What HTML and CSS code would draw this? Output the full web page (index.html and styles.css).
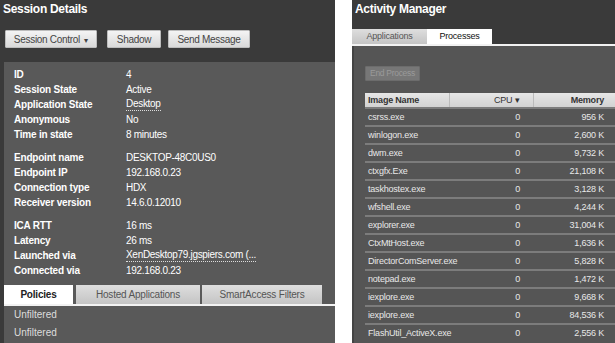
FILE: index.html
```html
<!DOCTYPE html>
<html>
<head>
    <title>Session Details / Activity Manager</title>
    <link rel="stylesheet" href="styles.css">
</head>
<body>
    <!-- Session Details -->
    <div class="session">
        <div class="panel-title">Session Details</div>
        <div class="toolbar">
            <button class="btn">Session Control <span class="caret">▾</span></button>
            <button class="btn">Shadow</button>
            <button class="btn">Send Message</button>
        </div>
        <div class="details">
            <div class="group">
                <div class="row"><span class="label">ID</span><span class="value">4</span></div>
                <div class="row"><span class="label">Session State</span><span class="value">Active</span></div>
                <div class="row"><span class="label">Application State</span><span class="value link">Desktop</span></div>
                <div class="row"><span class="label">Anonymous</span><span class="value">No</span></div>
                <div class="row"><span class="label">Time in state</span><span class="value">8 minutes</span></div>
            </div>
            <div class="group">
                <div class="row"><span class="label">Endpoint name</span><span class="value">DESKTOP-48C0US0</span></div>
                <div class="row"><span class="label">Endpoint IP</span><span class="value">192.168.0.23</span></div>
                <div class="row"><span class="label">Connection type</span><span class="value">HDX</span></div>
                <div class="row"><span class="label">Receiver version</span><span class="value">14.6.0.12010</span></div>
            </div>
            <div class="group">
                <div class="row"><span class="label">ICA RTT</span><span class="value">16 ms</span></div>
                <div class="row"><span class="label">Latency</span><span class="value">26 ms</span></div>
                <div class="row"><span class="label">Launched via</span><span class="value link">XenDesktop79.jgspiers.com (...</span></div>
                <div class="row"><span class="label">Connected via</span><span class="value">192.168.0.23</span></div>
            </div>

            <div class="tabs session-tabs">
                <div class="tab active">Policies</div>
                <div class="tab">Hosted Applications</div>
                <div class="tab">SmartAccess Filters</div>
            </div>
            <div class="policy">Unfiltered</div>
            <div class="policy">Unfiltered</div>
        </div>
    </div>

    <!-- Activity Manager -->
    <div class="activity">
        <div class="panel-title">Activity Manager</div>
        <div class="tabs activity-tabs">
            <div class="tab">Applications</div>
            <div class="tab active">Processes</div>
        </div>
        <div class="processes">
            <button class="btn disabled">End Process</button>
            <table class="proc-table">
                <colgroup>
                    <col class="col-name">
                    <col class="col-cpu">
                    <col class="col-mem">
                </colgroup>
                <thead>
                    <tr>
                        <th>Image Name</th>
                        <th class="cpu">CPU <span class="caret">▾</span></th>
                        <th class="mem">Memory</th>
                    </tr>
                </thead>
                <tbody>
                    <tr><td>csrss.exe</td><td class="cpu">0</td><td class="mem">956 K</td></tr>
                    <tr><td>winlogon.exe</td><td class="cpu">0</td><td class="mem">2,600 K</td></tr>
                    <tr><td>dwm.exe</td><td class="cpu">0</td><td class="mem">9,732 K</td></tr>
                    <tr><td>ctxgfx.Exe</td><td class="cpu">0</td><td class="mem">21,108 K</td></tr>
                    <tr><td>taskhostex.exe</td><td class="cpu">0</td><td class="mem">3,128 K</td></tr>
                    <tr><td>wfshell.exe</td><td class="cpu">0</td><td class="mem">4,244 K</td></tr>
                    <tr><td>explorer.exe</td><td class="cpu">0</td><td class="mem">31,004 K</td></tr>
                    <tr><td>CtxMtHost.exe</td><td class="cpu">0</td><td class="mem">1,636 K</td></tr>
                    <tr><td>DirectorComServer.exe</td><td class="cpu">0</td><td class="mem">5,828 K</td></tr>
                    <tr><td>notepad.exe</td><td class="cpu">0</td><td class="mem">1,472 K</td></tr>
                    <tr><td>iexplore.exe</td><td class="cpu">0</td><td class="mem">9,668 K</td></tr>
                    <tr><td>iexplore.exe</td><td class="cpu">0</td><td class="mem">84,536 K</td></tr>
                    <tr><td>FlashUtil_ActiveX.exe</td><td class="cpu">0</td><td class="mem">2,556 K</td></tr>
                </tbody>
            </table>
        </div>
    </div>
</body>
</html>
```

FILE: styles.css
```css
body {
    margin: 0;
    width: 615px;
    height: 343px;
    display: flex;
    background: #fff;
    font-family: "Liberation Sans", Arial, sans-serif;
    overflow: hidden;
}

.panel-title {
    color: #fff;
    font-weight: bold;
    font-size: 12px;
    letter-spacing: -0.3px;
    padding: 2px 3px;
    line-height: 14px;
}

.btn {
    font-family: inherit;
    font-size: 10px;
    letter-spacing: -0.3px;
    color: #444;
    height: 18px;
    padding: 0;
    white-space: nowrap;
    border: 1px solid #bdbdbd;
    border-radius: 1px;
    background: linear-gradient(#f4f4f4, #d9d9d9);
}

.btn .caret {
    font-size: 8px;
    margin-left: 2px;
}

.btn.disabled {
    color: #9a9a9a;
    background: #777;
    border-color: #6c6c6c;
    height: 15px;
    width: 55px;
    font-size: 8.5px;
}

/* left panel */
.session {
    width: 335px;
    background: #3a3a3a;
    display: flex;
    flex-direction: column;
}

.toolbar {
    display: flex;
    gap: 10px;
    padding: 12px 0 0 5px;
}

.toolbar .btn:first-child {
    width: 92px;
}

.toolbar .btn:nth-child(2) {
    width: 54px;
}

.toolbar .btn:nth-child(3) {
    width: 82px;
    margin-left: -3px;
}

.details {
    flex: 1;
    margin: 14px 0 0 4px;
    background: #595959;
    padding-top: 5px;
}

.group {
    margin-bottom: 8px;
}

.row {
    display: flex;
    height: 15px;
    line-height: 15px;
    font-size: 10px;
    color: #fff;
}

.label {
    width: 112px;
    padding-left: 10px;
    font-weight: bold;
    letter-spacing: -0.2px;
}

.value {
    letter-spacing: -0.3px;
}

.link {
    border-bottom: 1px dotted #ddd;
    line-height: 13px;
    height: 13px;
}

.tabs {
    display: flex;
    border-bottom: 2px solid #f2f2f2;
}

.tab {
    font-size: 10px;
    color: #555;
    text-align: center;
    background: linear-gradient(#dedede, #c4c4c4);
    letter-spacing: -0.2px;
}

.tab.active {
    background: #fff;
    color: #222;
    font-weight: bold;
}

.session-tabs {
    margin-top: -1px;
    height: 19px;
}

.session-tabs .tab {
    line-height: 19px;
}

.session-tabs .tab:nth-child(1) {
    width: 69px;
}

.session-tabs .tab:nth-child(2) {
    width: 124px;
    margin-left: 3px;
}

.session-tabs .tab:nth-child(3) {
    width: 120px;
    margin-left: 2px;
}

.policy {
    font-size: 10px;
    color: #ddd;
    padding-left: 10px;
    line-height: 18px;
}

.policy:first-of-type {
    margin-top: 2px;
}

/* right panel */
.activity {
    width: 263px;
    margin-left: 17px;
    background: #3a3a3a;
    display: flex;
    flex-direction: column;
}

.activity-tabs {
    margin-top: 11px;
    height: 15px;
}

.activity-tabs .tab {
    line-height: 15px;
    font-size: 9px;
}

.activity-tabs .tab:nth-child(1) {
    width: 75px;
}

.activity-tabs .tab:nth-child(2) {
    width: 65px;
    font-weight: normal;
    color: #111;
}

.processes {
    flex: 1;
    background: #555;
    padding: 16px 0 0 11px;
    border-left: 2px solid #444;
}

.proc-table {
    margin-top: 12px;
    width: 250px;
    table-layout: fixed;
    border-collapse: collapse;
    font-size: 9px;
    letter-spacing: -0.2px;
}

.proc-table col.col-name {
    width: 84px;
}

.proc-table col.col-cpu {
    width: 84px;
}

.proc-table th {
    height: 14px;
    background: linear-gradient(#e6e6e6, #d2d2d2);
    color: #333;
    text-align: left;
    padding: 0 3px;
    border-right: 1px solid #bbb;
    white-space: nowrap;
}

.proc-table th:last-child {
    border-right: none;
}

.proc-table th.cpu {
    font-weight: normal;
}

.proc-table .cpu {
    text-align: right;
    padding-right: 13px;
}

.proc-table .mem {
    text-align: right;
    padding-right: 11px;
}

.proc-table td {
    color: #e8e8e8;
    height: 16px;
    border-top: 2px solid #7c7c7c;
    padding-top: 0;
    padding-bottom: 0;
    padding-left: 3px;
    white-space: nowrap;
    overflow: visible;
}
```
